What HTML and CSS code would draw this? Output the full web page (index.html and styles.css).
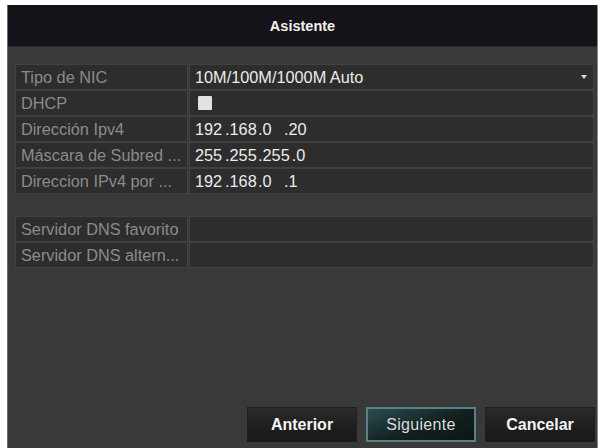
FILE: index.html
```html
<!DOCTYPE html>
<html lang="es">
<head>
<meta charset="utf-8">
<title>Asistente</title>
<link rel="stylesheet" href="styles.css">
</head>
<body>
<div class="window">
  <div class="titlebar">Asistente</div>
  <div class="content">
    <div class="group">
      <div class="label">Tipo de NIC</div>
      <div class="value select">10M/100M/1000M Auto<span class="arrow"></span></div>
      <div class="label">DHCP</div>
      <div class="value"><span class="checkbox"></span></div>
      <div class="label">Dirección Ipv4</div>
      <div class="value ip"><span class="seg s1">192</span><span class="seg s2">.168</span><span class="seg s3">.0</span><span class="seg">.20</span></div>
      <div class="label">Máscara de Subred ...</div>
      <div class="value ip"><span class="seg s1">255</span><span class="seg s2">.255</span><span class="seg s3">.255</span><span class="seg">.0</span></div>
      <div class="label">Direccion IPv4 por ...</div>
      <div class="value ip"><span class="seg s1">192</span><span class="seg s2">.168</span><span class="seg s3">.0</span><span class="seg">.1</span></div>
    </div>
    <div class="group dns">
      <div class="label">Servidor DNS favorito</div>
      <div class="value"></div>
      <div class="label">Servidor DNS altern...</div>
      <div class="value"></div>
    </div>
  </div>
  <div class="footer">
    <button class="btn">Anterior</button>
    <button class="btn primary">Siguiente</button>
    <button class="btn">Cancelar</button>
  </div>
</div>
</body>
</html>
```
FILE: styles.css
```css
html, body {
  margin: 0;
  padding: 0;
  background: #ffffff;
}
body {
  width: 604px;
  height: 448px;
  overflow: hidden;
  font-family: "Liberation Sans", Arial, sans-serif;
}
.window {
  margin: 5px 0 0 7px;
  width: 591px;
  height: 443px;
  background: #393939;
  border-left: 1px solid #6a6a6a;
  border-right: 1px solid #8a8a8a;
  box-sizing: border-box;
  display: flex;
  flex-direction: column;
}
.titlebar {
  height: 42px;
  flex: none;
  background: #16121a;
  color: #f2f2f2;
  font-weight: bold;
  font-size: 14.5px;
  display: flex;
  align-items: center;
  justify-content: center;
  border-bottom: 1px solid #2a262c;
  box-sizing: border-box;
}
.content {
  flex: 1;
  padding: 18px 4px 0 8px;
}
.group {
  display: grid;
  grid-template-columns: 171px 1fr;
  grid-auto-rows: 24px;
  column-gap: 3px;
  row-gap: 2px;
}
.group.dns {
  margin-top: 24px;
}
.label, .value {
  background: #2d2d2d;
  box-shadow: 0 0 0 1px #414141;
  display: flex;
  align-items: center;
  white-space: nowrap;
  overflow: hidden;
  font-size: 16.3px;
}
.label {
  color: #8b8b8b;
  padding-left: 5px;
}
.value {
  color: #ececec;
  padding-left: 5px;
  position: relative;
}
.select {
  justify-content: space-between;
  padding-right: 5px;
}
.arrow {
  width: 0;
  height: 0;
  border-left: 3px solid transparent;
  border-right: 3px solid transparent;
  border-top: 4px solid #d8d8d8;
  margin-right: 1px;
}
.checkbox {
  width: 14px;
  height: 14px;
  margin-left: 3px;
  background: #e2e2e2;
  border-radius: 1px;
}
.seg {
  display: inline-block;
}
.s1 { width: 30px; }
.s2 { width: 33px; }
.s3 { min-width: 24px; padding-right: 2px; }
.footer {
  height: 48px;
  flex: none;
  display: flex;
  justify-content: flex-end;
  align-items: flex-start;
  gap: 9px;
  padding: 7px 2px 0 0;
  box-sizing: border-box;
}
.btn {
  width: 110px;
  height: 35px;
  border: 1px solid #1e1e1e;
  background: linear-gradient(#2b2b2b, #1d1d1d 60%, #1a1a1a);
  color: #f4f4f4;
  font-family: "Liberation Sans", Arial, sans-serif;
  font-weight: bold;
  font-size: 16px;
  padding: 0;
}
.btn.primary {
  border: 2px solid #5b8188;
  background: linear-gradient(160deg, #2c4d52, #12201f 55%, #0e1516);
  color: #dcdcdc;
  font-weight: normal;
  font-size: 16px;
  letter-spacing: 0.3px;
}
```
